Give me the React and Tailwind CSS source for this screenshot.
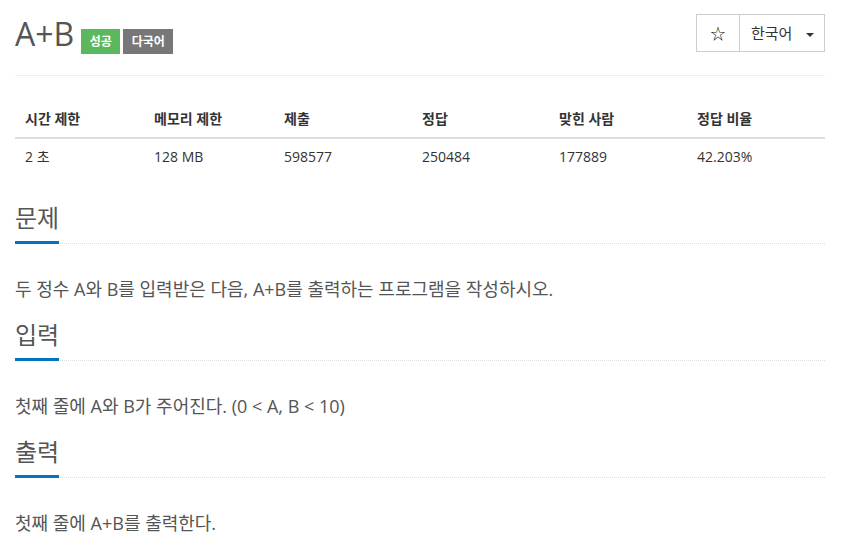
export default function App() {
  const heads = ['시간 제한', '메모리 제한', '제출', '정답', '맞힌 사람', '정답 비율'];
  const vals = ['2 초', '128 MB', '598577', '250484', '177889', '42.203%'];

  const sections = [
    { title: '문제', text: '두 정수 A와 B를 입력받은 다음, A+B를 출력하는 프로그램을 작성하시오.' },
    { title: '입력', text: '첫째 줄에 A와 B가 주어진다. (0 < A, B < 10)' },
    { title: '출력', text: '첫째 줄에 A+B를 출력한다.' },
  ];

  return (
    <div
      className="w-[840px] min-h-[553px] bg-white px-[15px] text-[#333]"
      style={{ fontFamily: '"Open Sans", "Noto Sans CJK KR", sans-serif' }}
    >
      {/* Header */}
      <div className="h-[76px] border-b border-[#eee] flex justify-between items-start pt-[14px]">
        <div className="flex items-start">
          <h1 className="text-[32px] leading-[40px] text-[#555] font-normal">A+B</h1>
          <span className="ml-[7px] mt-[15px] h-[25px] w-[39px] flex items-center justify-center bg-[#5cb85c] text-white text-[12px] font-bold">
            성공
          </span>
          <span className="ml-[3px] mt-[15px] h-[25px] w-[50px] flex items-center justify-center bg-[#777] text-white text-[12px] font-bold">
            다국어
          </span>
        </div>
        <div className="flex h-[38px] border border-[#ccc]">
          <button className="w-[43px] flex items-center justify-center text-[15px] text-[#222] border-r border-[#ccc]">
            ☆
          </button>
          <button className="w-[84px] flex items-center pl-[11px] text-[15px] text-[#333]">
            한국어
            <span className="ml-[14px] mt-[3px] w-0 h-0 border-t-[4px] border-t-[#333] border-x-[4px] border-x-transparent" />
          </button>
        </div>
      </div>

      {/* Info table */}
      <div className="mt-[25px] mb-[28px] text-[14px]">
        <div className="grid grid-cols-[129px_130px_138px_137px_138px_138px] border-b-2 border-[#ddd]">
          {heads.map((h) => (
            <div key={h} className="px-[10px] py-[8px] leading-[20px] font-bold">
              {h}
            </div>
          ))}
        </div>
        <div className="grid grid-cols-[129px_130px_138px_137px_138px_138px]">
          {vals.map((v) => (
            <div key={v} className="px-[10px] py-[8px] leading-[20px]">
              {v}
            </div>
          ))}
        </div>
      </div>

      {/* Sections */}
      {sections.map((s) => (
        <div key={s.title} className="mb-[19px]">
          <div className="flex border-b border-dotted border-[#ddd]">
            <h2 className="text-[24px] leading-[30px] text-[#555] pb-[8px] border-b-[3px] border-[#0076c0] -mb-px">
              {s.title}
            </h2>
          </div>
          <p className="mt-[33px] text-[18px] leading-[24px] text-[#555]">{s.text}</p>
        </div>
      ))}
    </div>
  );
}
